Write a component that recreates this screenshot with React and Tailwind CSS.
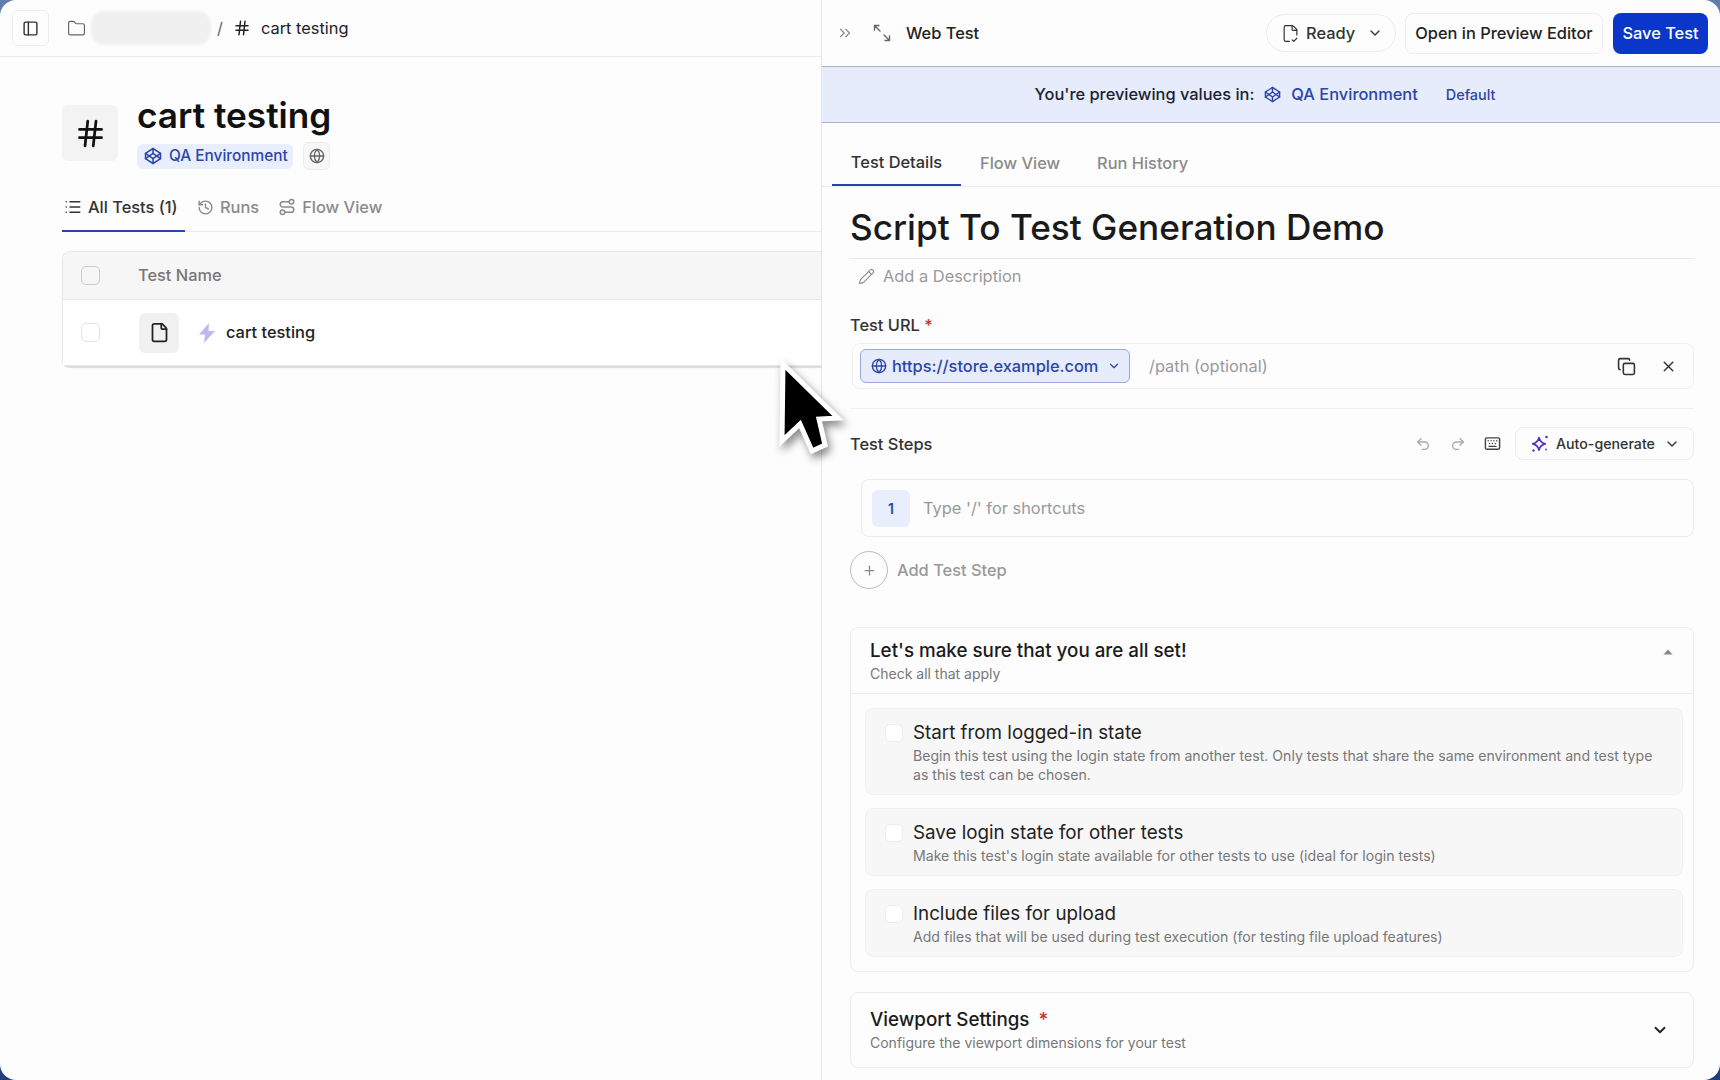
import React from "react";
import {
  ChevronDown,
  ChevronsRight,
  Codepen,
  Copy,
  File,
  FileCheck2,
  Folder,
  Globe,
  Hash,
  History,
  Keyboard,
  List,
  PanelLeft,
  Pencil,
  Plus,
  Redo2,
  Route,
  Undo2,
  X,
} from "lucide-react";

const ExpandIcon = () => (
  <svg width="18" height="18" viewBox="0 0 18 18" fill="none" stroke="#666" strokeWidth="1.4" strokeLinecap="round" strokeLinejoin="round">
    <path d="M1.5 6V1.5H6M1.5 1.5L7 7M16.5 12v4.5H12M16.5 16.5L11 11" />
  </svg>
);

const BoltIcon = () => (
  <svg width="16" height="20" viewBox="0 0 16 20" fill="#c4b5f0">
    <path d="M10 0L0 11.5h6L5 20l11-12h-6.500z" />
  </svg>
);

const SparkIcon = () => (
  <svg width="20" height="20" viewBox="0 0 20 20" fill="none" stroke="#5b2fc4" strokeWidth="1.700" strokeLinejoin="round">
    <path d="M9 3.500c.8 4 2.300 5.500 6.300 6.300-4 .8-5.500 2.300-6.300 6.400-.8-4.100-2.300-5.600-6.300-6.400 4-.8 5.500-2.300 6.300-6.300z" />
    <circle cx="16.500" cy="3" r="1.300" fill="#5b2fc4" stroke="none" />
    <circle cx="3.500" cy="16.500" r="1.200" fill="#5b2fc4" stroke="none" />
    <circle cx="16" cy="15.500" r="0.900" fill="#5b2fc4" stroke="none" />
  </svg>
);

const OptionRow = ({ title, children, height }) => (
  <div className={`flex gap-[10px] rounded-lg border border-[#f0f0f0] bg-[#f7f7f7] pl-[19px] pr-[14px] pt-[12px] ${height}`}>
    <span className="mt-[3px] h-[18px] w-[18px] shrink-0 rounded-[5px] border border-[#ececec] bg-white" />
    <div className="pr-[14px]">
      <div className="text-[18.800px] leading-[24px] text-[#222]">{title}</div>
      <div className="mt-[1px] text-[14.100px] leading-[19px] text-[#777]">{children}</div>
    </div>
  </div>
);

const LeftPanel = () => (
  <div className="flex w-[822px] shrink-0 flex-col border-r border-[#e6e6e6]">
    {/* breadcrumb */}
    <div className="flex h-[57px] items-center border-b border-[#ececec] pl-[12px]">
      <button className="flex h-[36px] w-[37px] items-center justify-center rounded-md border border-[#ececec] text-[#333]">
        <PanelLeft size={17} />
      </button>
      <Folder size={19} strokeWidth={1.500} className="ml-[18px] text-[#666]" />
      <span className="ml-[5px] h-[34px] w-[120px] rounded-[14px] bg-[#f0f0f0] blur-[1px]" />
      <span className="ml-[6px] text-[16.400px] text-[#666]">/</span>
      <Hash size={18} className="ml-[10px] text-[#222]" />
      <span className="ml-[10px] text-[16.400px] text-[#222]">cart testing</span>
    </div>

    <div className="flex-1 pl-[62px]">
      {/* heading */}
      <div className="mt-[35px] flex items-start">
        <div className="mt-[13px] flex h-[56px] w-[56px] items-center justify-center rounded-md bg-[#f3f3f3] text-[#111]">
          <Hash size={33} strokeWidth={2} />
        </div>
        <div className="ml-[19px]">
          <div className="text-[35.200px] font-semibold leading-[46px] text-[#111]">cart testing</div>
          <div className="mt-[4px] flex items-center">
            <div className="flex h-[25px] w-[156px] items-center gap-[7px] rounded-md bg-[#e8eefc] pl-[7px] text-[15.400px] font-medium text-[#2b46a8]">
              <Codepen size={18} />
              QA Environment
            </div>
            <div className="ml-[10px] flex h-[28px] w-[27px] items-center justify-center rounded-md border border-[#ececec] bg-[#f7f7f7] text-[#666]">
              <Globe size={16} />
            </div>
          </div>
        </div>
      </div>

      {/* tabs */}
      <div className="mt-[14px] flex h-[48px] items-center border-b border-[#ececec] text-[16.400px] font-medium">
        <div className="flex h-[48px] w-[123px] items-center gap-[6px] border-b-2 border-[#2743b0] pl-[2px] pt-[1px] text-[#333]">
          <List size={18} />
          All Tests (1)
        </div>
        <div className="ml-[12px] flex items-center gap-[6px] text-[#8a8a8a]">
          <History size={17} />
          Runs
        </div>
        <div className="ml-[19px] flex items-center gap-[6px] text-[#8a8a8a]">
          <Route size={18} />
          Flow View
        </div>
      </div>

      {/* table */}
      <div className="mt-[19px] rounded-l-lg border border-r-0 border-[#e8e8e8] shadow-[0_2px_1px_#dcdcdc]">
        <div className="flex h-[48px] items-center rounded-tl-lg border-b border-[#e8e8e8] bg-[#f6f6f6]">
          <span className="ml-[18px] h-[19px] w-[19px] rounded-[5px] border border-[#c9c9c9]" />
          <span className="ml-[38px] text-[16.400px] font-medium text-[#777]">Test Name</span>
        </div>
        <div className="flex h-[65px] items-center bg-white">
          <span className="ml-[18px] h-[19px] w-[19px] rounded-[5px] border border-[#e4e4e4]" />
          <div className="ml-[39px] flex h-[40px] w-[40px] items-center justify-center rounded-md bg-[#f1f1f1] text-[#222]">
            <File size={21} />
          </div>
          <span className="ml-[20px] flex">
            <BoltIcon />
          </span>
          <span className="ml-[11px] text-[16.400px] font-medium text-[#222]">cart testing</span>
        </div>
      </div>
    </div>
  </div>
);

const RightPanel = () => (
  <div className="flex min-w-0 flex-1 flex-col">
    {/* top bar */}
    <div className="flex h-[66px] items-center pl-[14px] pr-[12px]">
      <ChevronsRight size={18} strokeWidth={1.500} className="text-[#888]" />
      <span className="ml-[19px]">
        <ExpandIcon />
      </span>
      <span className="ml-[15px] text-[16.400px] font-medium text-[#222]">Web Test</span>
      <div className="ml-auto flex h-[38px] w-[130px] items-center gap-[6px] rounded-full border border-[#ececec] pl-[14px] text-[16.400px] font-medium text-[#333]">
        <FileCheck2 size={19} strokeWidth={1.500} />
        Ready
        <ChevronDown size={16} className="ml-[6px]" />
      </div>
      <button className="ml-[9px] h-[41px] w-[198px] rounded-lg border border-[#ececec] text-[16.400px] font-medium text-[#222]">
        Open in Preview Editor
      </button>
      <button className="ml-[10px] h-[41px] w-[95px] rounded-lg bg-[#0a36c9] text-[16.400px] font-medium text-white">
        Save Test
      </button>
    </div>

    {/* env banner */}
    <div className="flex h-[57px] items-center justify-center gap-[10px] border-y border-[#aab2d0] bg-[#e6ecfb] pr-[12px]">
      <span className="text-[16.400px] font-medium text-[#1d2233]">You're previewing values in:</span>
      <Codepen size={17} className="text-[#2b46a8]" />
      <span className="text-[16.400px] font-medium text-[#2b46a8]">QA Environment</span>
      <span className="ml-[18px] text-[14.400px] font-medium text-[#2b46a8]">Default</span>
    </div>

    {/* tabs */}
    <div className="flex h-[64px] items-end border-b border-[#ececec] pl-[10px] text-[16.400px] font-medium">
      <div className="flex h-[36px] w-[129px] items-start justify-center border-b-2 border-[#2743b0] text-[#333]">Test Details</div>
      <div className="ml-[19px] h-[35px] text-[#8a8a8a]">Flow View</div>
      <div className="ml-[37px] h-[35px] text-[#8a8a8a]">Run History</div>
    </div>

    <div className="flex-1 pl-[28px] pr-[26px]">
      <div className="h-[72px] border-b border-[#e8e8e8] pt-[18px] text-[35.200px] font-medium leading-[44px] text-[#1a1a1a]">
        Script To Test Generation Demo
      </div>

      <div className="mt-[5px] flex h-[24px] items-center pl-[8px] text-[16.400px] text-[#999]">
        <Pencil size={17} strokeWidth={1.500} className="text-[#888]" />
        <span className="ml-[8px]">Add a Description</span>
      </div>

      <div className="mt-[25px] text-[16.400px] font-medium leading-[24px] text-[#333]">
        Test URL <span className="text-[#c83232]">*</span>
      </div>
      <div className="ml-[2px] mt-[6px] flex h-[46px] items-center rounded-lg border border-[#f0f0f0] pl-[7px] pr-[16px]">
        <div className="flex h-[34px] w-[270px] items-center gap-[5px] rounded-md border border-[#97a9dc] bg-[#e6ecfb] pl-[10px] text-[16.400px] font-medium text-[#2b46a8]">
          <Globe size={16} />
          https://store.example.com
          <ChevronDown size={14} className="ml-[4px]" />
        </div>
        <span className="ml-[19px] text-[16.400px] text-[#999]">/path (optional)</span>
        <Copy size={19} className="ml-auto text-[#333]" />
        <X size={17} className="ml-[24px] text-[#333]" />
      </div>
      <div className="mt-[19px] border-t border-[#f0f0f0]" />

      <div className="mt-[18px] flex h-[33px] items-center">
        <span className="pt-[2px] text-[16.400px] font-medium text-[#333]">Test Steps</span>
        <Undo2 size={16} className="ml-auto text-[#aaa]" />
        <Redo2 size={16} className="ml-[19px] text-[#aaa]" />
        <Keyboard size={17} className="ml-[18px] text-[#444]" />
        <div className="ml-[14px] flex h-[33px] w-[179px] items-center rounded-lg border border-[#ececec] pl-[14px] text-[14.200px] font-medium text-[#333]">
          <SparkIcon />
          <span className="ml-[6px]">Auto-generate</span>
          <ChevronDown size={16} className="ml-[9px]" />
        </div>
      </div>

      <div className="ml-[11px] mt-[19px] flex h-[58px] items-center rounded-lg border border-[#ececec] pl-[10px]">
        <span className="flex h-[37px] w-[38px] items-center justify-center rounded-md bg-[#e8eefc] text-[14px] font-semibold text-[#2b46a8]">1</span>
        <span className="ml-[13px] text-[16.400px] text-[#999]">Type '/' for shortcuts</span>
      </div>

      <div className="mt-[14px] flex items-center">
        <span className="flex h-[38px] w-[38px] items-center justify-center rounded-full border border-[#bbb] text-[#888]">
          <Plus size={15} />
        </span>
        <span className="ml-[9px] text-[16.400px] font-medium text-[#999]">Add Test Step</span>
      </div>

      {/* checklist */}
      <div className="mt-[38px] rounded-lg border border-[#ececec]">
        <div className="flex h-[66px] items-start justify-between border-b border-[#ececec] pl-[19px] pr-[20px] pt-[11px]">
          <div>
            <div className="text-[18.800px] font-medium leading-[24px] text-[#1a1a1a]">Let's make sure that you are all set!</div>
            <div className="text-[14px] leading-[21px] text-[#777]">Check all that apply</div>
          </div>
          <svg width="10" height="6" viewBox="0 0 10 6" fill="#888" className="mt-[10px]">
            <path d="M5 0.500L9.500 5.500H0.500z" />
          </svg>
        </div>
        <div className="flex h-[277px] flex-col gap-[13px] pl-[14px] pr-[10px] pt-[14px]">
          <OptionRow title="Start from logged-in state" height="h-[87px]">
            Begin this test using the login state from another test. Only tests that share the same environment and test type as this test can be chosen.
          </OptionRow>
          <OptionRow title="Save login state for other tests" height="h-[68px]">
            Make this test's login state available for other tests to use (ideal for login tests)
          </OptionRow>
          <OptionRow title="Include files for upload" height="h-[68px]">
            Add files that will be used during test execution (for testing file upload features)
          </OptionRow>
        </div>
      </div>

      <div className="mt-[20px] flex h-[76px] items-center justify-between rounded-lg border border-[#ececec] pl-[19px] pr-[24px]">
        <div>
          <div className="text-[18.800px] font-medium leading-[24px] text-[#1a1a1a]">
            Viewport Settings <span className="ml-[4px] text-[#c83232]">*</span>
          </div>
          <div className="text-[14px] leading-[21px] text-[#777]">Configure the viewport dimensions for your test</div>
        </div>
        <ChevronDown size={18} strokeWidth={2.500} className="text-[#222]" />
      </div>
    </div>
  </div>
);

const Cursor = () => (
  <svg className="absolute left-[777px] top-[358px] drop-shadow-[3px_5px_4px_rgba(0,0,0,0.45)]" width="68" height="100" viewBox="0 0 68 100">
    <path d="M6 6L61 60L42 61L48 87L35 93L23 66L5 83Z" fill="#000" stroke="#fff" strokeWidth="5" strokeLinejoin="miter" />
  </svg>
);

export default function App() {
  return (
    <div className="h-screen w-full overflow-hidden bg-gradient-to-b from-[#5f7fa8] to-[#1f3f80] font-['Inter',sans-serif]">
      <div className="relative flex h-full overflow-hidden rounded-[16px] bg-[#fdfdfd]">
        <LeftPanel />
        <RightPanel />
        <Cursor />
      </div>
    </div>
  );
}
